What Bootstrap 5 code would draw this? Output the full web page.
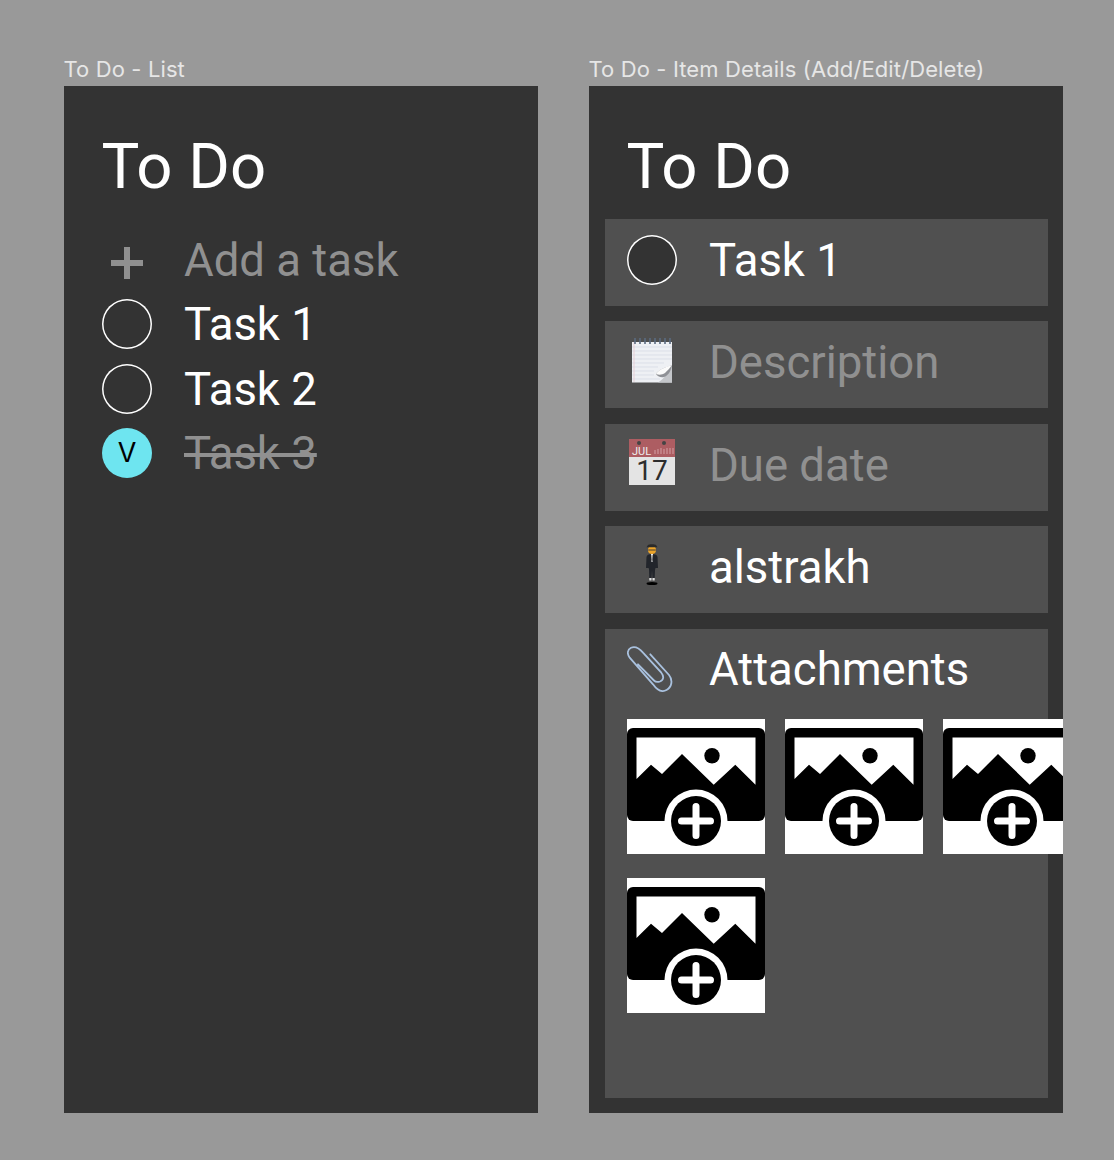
<!DOCTYPE html>
<html>

<head>
  <meta charset="utf-8">
  <meta name="viewport" content="width=device-width">
  <title>To Do</title>
  <link href="https://cdn.jsdelivr.net/npm/bootstrap@5.3.3/dist/css/bootstrap.min.css" rel="stylesheet" />
  <script src="https://cdn.jsdelivr.net/npm/bootstrap@5.3.3/dist/js/bootstrap.bundle.min.js"></script>
  <style>
    body {
      background: #999;
      font-family: Roboto, "Liberation Sans", sans-serif;
      color: #fff;
    }

    .board {
      padding: 53px 0 0 64px;
      gap: 51px;
    }

    .frame-col {
      width: 474px;
    }

    .frame-label {
      font-family: Inter, "Liberation Sans", sans-serif;
      font-size: 22px;
      letter-spacing: .12px;
      line-height: 33px;
      margin-left: -.5px;
      color: #e6e6e6;
      white-space: nowrap;
    }

    .frame {
      background: #333;
      height: 1027px;
      padding-top: 41px;
      overflow: hidden;
    }

    .frame-title {
      font-size: 63.5px;
      line-height: 80px;
      font-weight: 400;
      margin: 0 0 1px;
      padding-left: 37.5px;
    }

    .task-list {
      margin-top: 20.7px;
      padding-left: 38px;
    }

    .task-row {
      height: 64.5px;
      font-size: 45.5px;
    }

    .task-text {
      margin-top: 2px;
    }

    .slot {
      width: 50px;
      height: 50px;
      flex: none;
      margin-right: 32px;
    }

    .slot-up {
      margin-bottom: 7px;
    }

    .ring {
      box-shadow: inset 0 0 0 1.5px #fff;
      border-radius: 50%;
    }

    .ring-in-row {
      background: #333;
      margin-bottom: 3px;
    }

    .ring-done {
      background: #6ee5f0;
      border-radius: 50%;
      color: #000;
      font-family: Inter, "Liberation Sans", sans-serif;
      font-size: 27px;
    }

    .plus-mark {
      margin-top: 6px;
    }

    .muted-text {
      color: #909090;
    }

    .details {
      padding: 11px 15px 0 16px;
      gap: 15.4px;
    }

    .detail-row {
      background: #505050;
      height: 87px;
      padding-left: 22px;
      padding-bottom: 3px;
      font-size: 45.5px;
      flex: none;
    }

    .detail-tall {
      height: 469.4px;
      padding-left: 22px;
      background: #505050;
      font-size: 45.5px;
    }

    .detail-head {
      height: 81px;
      flex: none;
    }

    .thumbs {
      display: grid;
      grid-template-columns: repeat(3, 138px);
      column-gap: 20px;
      row-gap: 24px;
      margin-top: 9px;
    }

    .thumb {
      width: 138px;
      height: 135px;
      display: block;
    }

    .cal-icon {
      overflow: visible;
    }
  </style>
</head>

<body>
  <svg width="0" height="0" class="d-block">
    <symbol id="addImage" viewBox="0 0 138 135">
      <rect width="138" height="135" fill="#fff" />
      <rect y="9" width="138" height="93" rx="6" fill="#000" />
      <polygon points="9.5,60 24,45.7 35,55 55,35 86.7,65.7 108.3,45.7 128.5,65.7 128.5,18.5 9.5,18.5" fill="#fff" />
      <circle cx="85" cy="36.7" r="7.7" fill="#000" />
      <circle cx="69" cy="102" r="31.5" fill="#fff" />
      <circle cx="69" cy="102" r="25" fill="#000" />
      <path d="M69 87.5v29M54.500 102h29" stroke="#fff" stroke-width="7" stroke-linecap="round" />
    </symbol>
  </svg>

  <div class="board d-flex">
    <div class="frame-col">
      <div class="frame-label">To Do - List</div>
      <div class="frame">
        <h1 class="frame-title">To Do</h1>
        <div class="task-list">
          <div class="task-row d-flex align-items-center">
            <span class="slot d-flex align-items-center justify-content-center">
              <svg class="plus-mark" width="34" height="34" viewBox="0 0 34 34">
                <path d="M17 1v32M1 17h32" stroke="#909090" stroke-width="6" />
              </svg>
            </span>
            <span class="task-text muted-text">Add a task</span>
          </div>
          <div class="task-row d-flex align-items-center">
            <span class="slot ring"></span>
            <span class="task-text">Task 1</span>
          </div>
          <div class="task-row d-flex align-items-center">
            <span class="slot ring"></span>
            <span class="task-text">Task 2</span>
          </div>
          <div class="task-row d-flex align-items-center">
            <span class="slot ring-done d-flex align-items-center justify-content-center">V</span>
            <span class="task-text muted-text text-decoration-line-through">Task 3</span>
          </div>
        </div>
      </div>
    </div>

    <div class="frame-col">
      <div class="frame-label">To Do - Item Details (Add/Edit/Delete)</div>
      <div class="frame">
        <h1 class="frame-title">To Do</h1>
        <div class="details d-flex flex-column">
          <div class="detail-row d-flex align-items-center">
            <span class="slot ring ring-in-row"></span>
            <span>Task 1</span>
          </div>
          <div class="detail-row d-flex align-items-center">
            <span class="slot slot-up d-flex align-items-center justify-content-center">
              <!-- notepad -->
              <svg width="40" height="46" viewBox="0 0 40 46">
                <path d="M0 5h40v40.500H0z" fill="#eef0f4" />
                <path d="M0 10h40M0 14h40M0 18h40M0 22h40M0 26h32M0 30h26M0 34h22M0 38h22M0 42h28" stroke="#d3d8e2" stroke-width=".7" />
                <path d="M2 5v40" stroke="#e6c9d0" stroke-width=".8" />
                <path d="M40 29c-3 6-8 13-14 16.500H40z" fill="#c4c6ca" />
                <path d="M24 37c3-5 9-6 16-9-1 6-4 11-8 12-3 .8-7-.500-8-3z" fill="#8f9196" />
                <path d="M24 37c3 1 6 1 9-1 2-2 5-5 7-8-6 2-13 4-16 9z" fill="#fbfbfb" />
                <path d="M3 1v6M8 1v6M13 1v6M18 1v6M23 1v6M28 1v6M33 1v6M38 1v6" stroke="#5b6b80" stroke-width="1.600" />
              </svg>
            </span>
            <span class="muted-text">Description</span>
          </div>
          <div class="detail-row d-flex align-items-center">
            <span class="slot slot-up d-flex align-items-center justify-content-center">
              <!-- calendar -->
              <svg class="cal-icon" width="46" height="46" viewBox="0 0 46 46">
                <rect width="46" height="18" fill="#ad5d62" />
                <rect y="18" width="46" height="28" fill="#e4e4e4" />
                <circle cx="10" cy="4" r="2" fill="#444" />
                <circle cx="35" cy="4" r="2" fill="#444" />
                <text x="3" y="15.500" font-size="11" fill="#eee" font-family="Roboto, sans-serif">JUL</text>
                <path d="M26 15v-4M29 15v-5M32 15v-6M35 15v-5M38 15v-6M41 15v-6M44 15v-6" stroke="#cf9599" stroke-width="1.200" />
                <text x="23" y="41" font-size="28" fill="#2d2d2d" text-anchor="middle" font-family="Roboto, sans-serif">17</text>
              </svg>
            </span>
            <span class="muted-text">Due date</span>
          </div>
          <div class="detail-row d-flex align-items-center">
            <span class="slot slot-up d-flex align-items-center justify-content-center">
              <!-- levitating man -->
              <svg width="14" height="41" viewBox="0 0 14 41">
                <ellipse cx="7" cy="39.500" rx="5.500" ry="1.500" fill="#000" />
                <circle cx="7" cy="6" r="4" fill="#eba42a" />
                <path d="M1.500 3.200h11L11 1C10 0 4 0 3 1z" fill="#2a2a2a" />
                <path d="M3.200 6h7.600" stroke="#333" stroke-width=".9" />
                <path d="M1.500 13c0-2 2.500-3 5.500-3s5.500 1 5.500 3l.5 11h-2.500l-.5 2-.3 8H7.500L7 26l-.5 8H4.300L4 25l-.5-1H1z" fill="#22252b" />
                <path d="M6 10h2l-.5 8h-1z" fill="#eee" />
                <path d="M6.800 11h.5l.3 5-.5 1-.5-1z" fill="#333" />
                <path d="M4.300 34h2.200v2.500H4.300zM7.500 34h2.200v2.500H7.500z" fill="#ddd" />
              </svg>
            </span>
            <span>alstrakh</span>
          </div>
          <div class="detail-tall">
            <div class="detail-head d-flex align-items-center">
              <span class="slot d-flex align-items-center justify-content-start">
                <!-- paperclip -->
                <svg width="46" height="46" viewBox="0 0 46 46">
                  <path d="M23.300 8.300 42 29C46 34 45 41 39.500 44 35 46.500 30 44 26 38.300L2.700 11.700C0 8 0 4 4 1.800 8 0 12 2 16 6.700L34.300 26.700C37 30 37 34 33 35.500 30 36.500 28 35.500 27 34.500L11 18.300" fill="none" stroke="#a9c1de" stroke-width="1.800" stroke-linecap="round" />
                </svg>
              </span>
              <span class="task-text">Attachments</span>
            </div>
            <div class="thumbs">
              <svg class="thumb"><use href="#addImage" /></svg>
              <svg class="thumb"><use href="#addImage" /></svg>
              <svg class="thumb"><use href="#addImage" /></svg>
              <svg class="thumb"><use href="#addImage" /></svg>
            </div>
          </div>
        </div>
      </div>
    </div>
  </div>
</body>

</html>
